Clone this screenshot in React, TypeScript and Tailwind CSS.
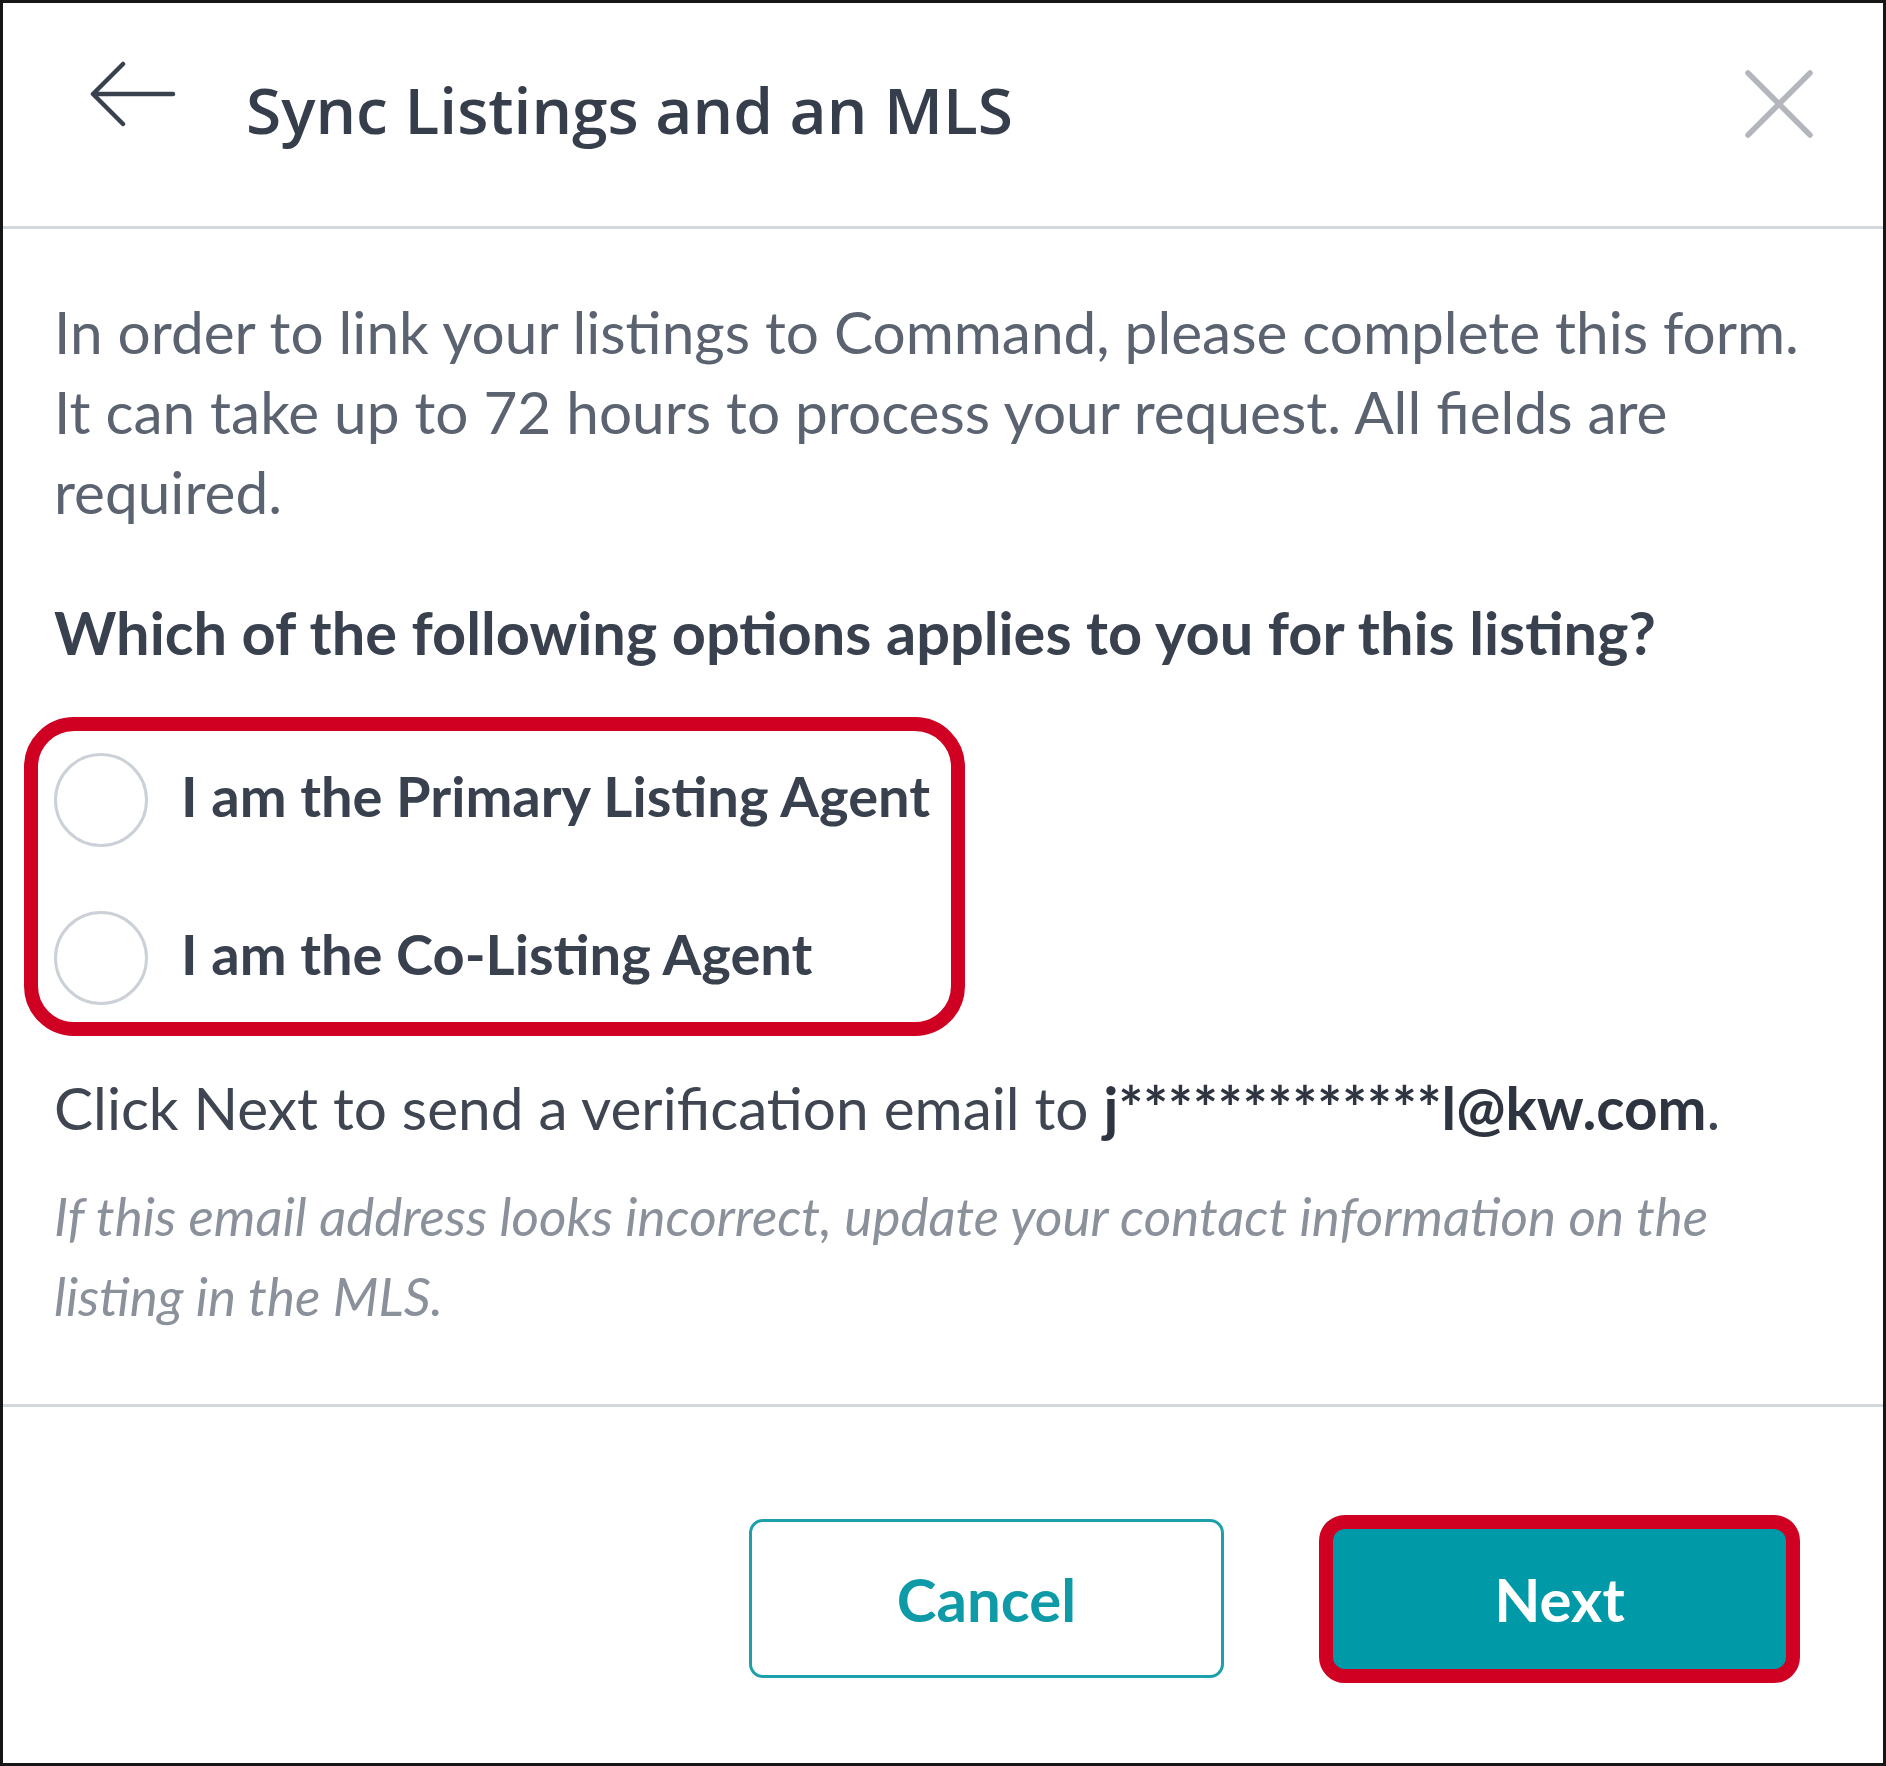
import React from "react";

const lato = { fontFamily: "Lato, 'Open Sans', sans-serif" };

export default function App() {
  return (
    <div
      className="w-[1886px] h-[1766px] border-[3px] border-[#161616] bg-white flex flex-col"
      style={lato}
    >
      {/* Header */}
      <header className="h-[226px] shrink-0 border-b-[3px] border-[#d3d8dd] flex items-start">
        <svg
          className="ml-[87px] mt-[58px] shrink-0"
          width="86"
          height="66"
          viewBox="-3 -3 86 66"
          fill="none"
          stroke="#39414f"
          strokeWidth="4.5"
          strokeLinecap="round"
          strokeLinejoin="round"
        >
          <path d="M80 30H1" />
          <path d="M30 0L0 30L30 60" />
        </svg>
        <h1
          className="ml-[70px] mt-[67px] text-[64px] leading-[80px] font-semibold text-[#363e4c] whitespace-nowrap"
          style={{ fontFamily: "'Open Sans', Lato, sans-serif" }}
        >
          Sync Listings and an MLS
        </h1>
        <svg
          className="ml-auto mr-[69px] mt-[66px] shrink-0"
          width="70"
          height="70"
          viewBox="0 0 70 70"
          fill="none"
          stroke="#b3b7bd"
          strokeWidth="5.5"
          strokeLinecap="round"
        >
          <path d="M4 4L66 66" />
          <path d="M66 4L4 66" />
        </svg>
      </header>

      {/* Body */}
      <main className="flex-1 px-[51px] pt-[62px] flex flex-col">
        <p className="text-[58.5px] leading-[80px] text-[#5c6370] whitespace-nowrap">
          In order to link your listings to Command, please complete this form.
          <br />
          It can take up to 72 hours to process your request. All fields are
          <br />
          required.
        </p>

        <h2 className="mt-[69px] text-[59.5px] leading-[64px] font-bold text-[#39414f] whitespace-nowrap">
          Which of the following options applies to you for this listing?
        </h2>

        <div className="relative mt-[89px] w-fit flex flex-col gap-[64px]">
          {["I am the Primary Listing Agent", "I am the Co-Listing Agent"].map((label) => (
            <label key={label} className="flex items-center h-[94px] gap-[33px] cursor-pointer">
              <span className="block w-[94px] h-[94px] rounded-full border-[3px] border-[#ccd1d7] bg-white shrink-0" />
              <span className="mb-[8px] text-[56px] leading-[64px] font-bold text-[#39414f] whitespace-nowrap">
                {label}
              </span>
            </label>
          ))}
          <span className="pointer-events-none absolute -top-[36px] -bottom-[31px] -left-[30px] -right-[35px] border-[14px] border-[#cf0022] rounded-[50px]" />
        </div>

        <p className="mt-[62px] text-[58.5px] leading-[80px] text-[#3f4651] whitespace-nowrap">
          Click Next to send a verification email to{" "}
          <span className="font-bold text-[#2f3540]">j*************l@kw.com</span>.
        </p>

        <p className="mt-[29px] text-[53px] leading-[80px] italic text-[#8b919a] whitespace-nowrap">
          If this email address looks incorrect, update your contact information on the
          <br />
          listing in the MLS.
        </p>
      </main>

      {/* Footer */}
      <footer className="h-[359px] shrink-0 border-t-[3px] border-[#d3d8dd] flex justify-end items-start pt-[112px] pr-[86px] gap-[98px]">
        <button className="w-[475px] h-[159px] rounded-[14px] border-[3px] border-[#1ca0ac] bg-white text-[60px] font-bold text-[#0f9aa7] flex items-center justify-center">
          Cancel
        </button>
        <div className="relative">
          <button className="w-[475px] h-[159px] rounded-[14px] bg-[#0099a8] text-[60px] font-bold text-white flex items-center justify-center">
            Next
          </button>
          <span className="pointer-events-none absolute -top-[4px] -bottom-[5px] -left-[3px] -right-[3px] border-[14px] border-[#cf0022] rounded-[26px]" />
        </div>
      </footer>
    </div>
  );
}
